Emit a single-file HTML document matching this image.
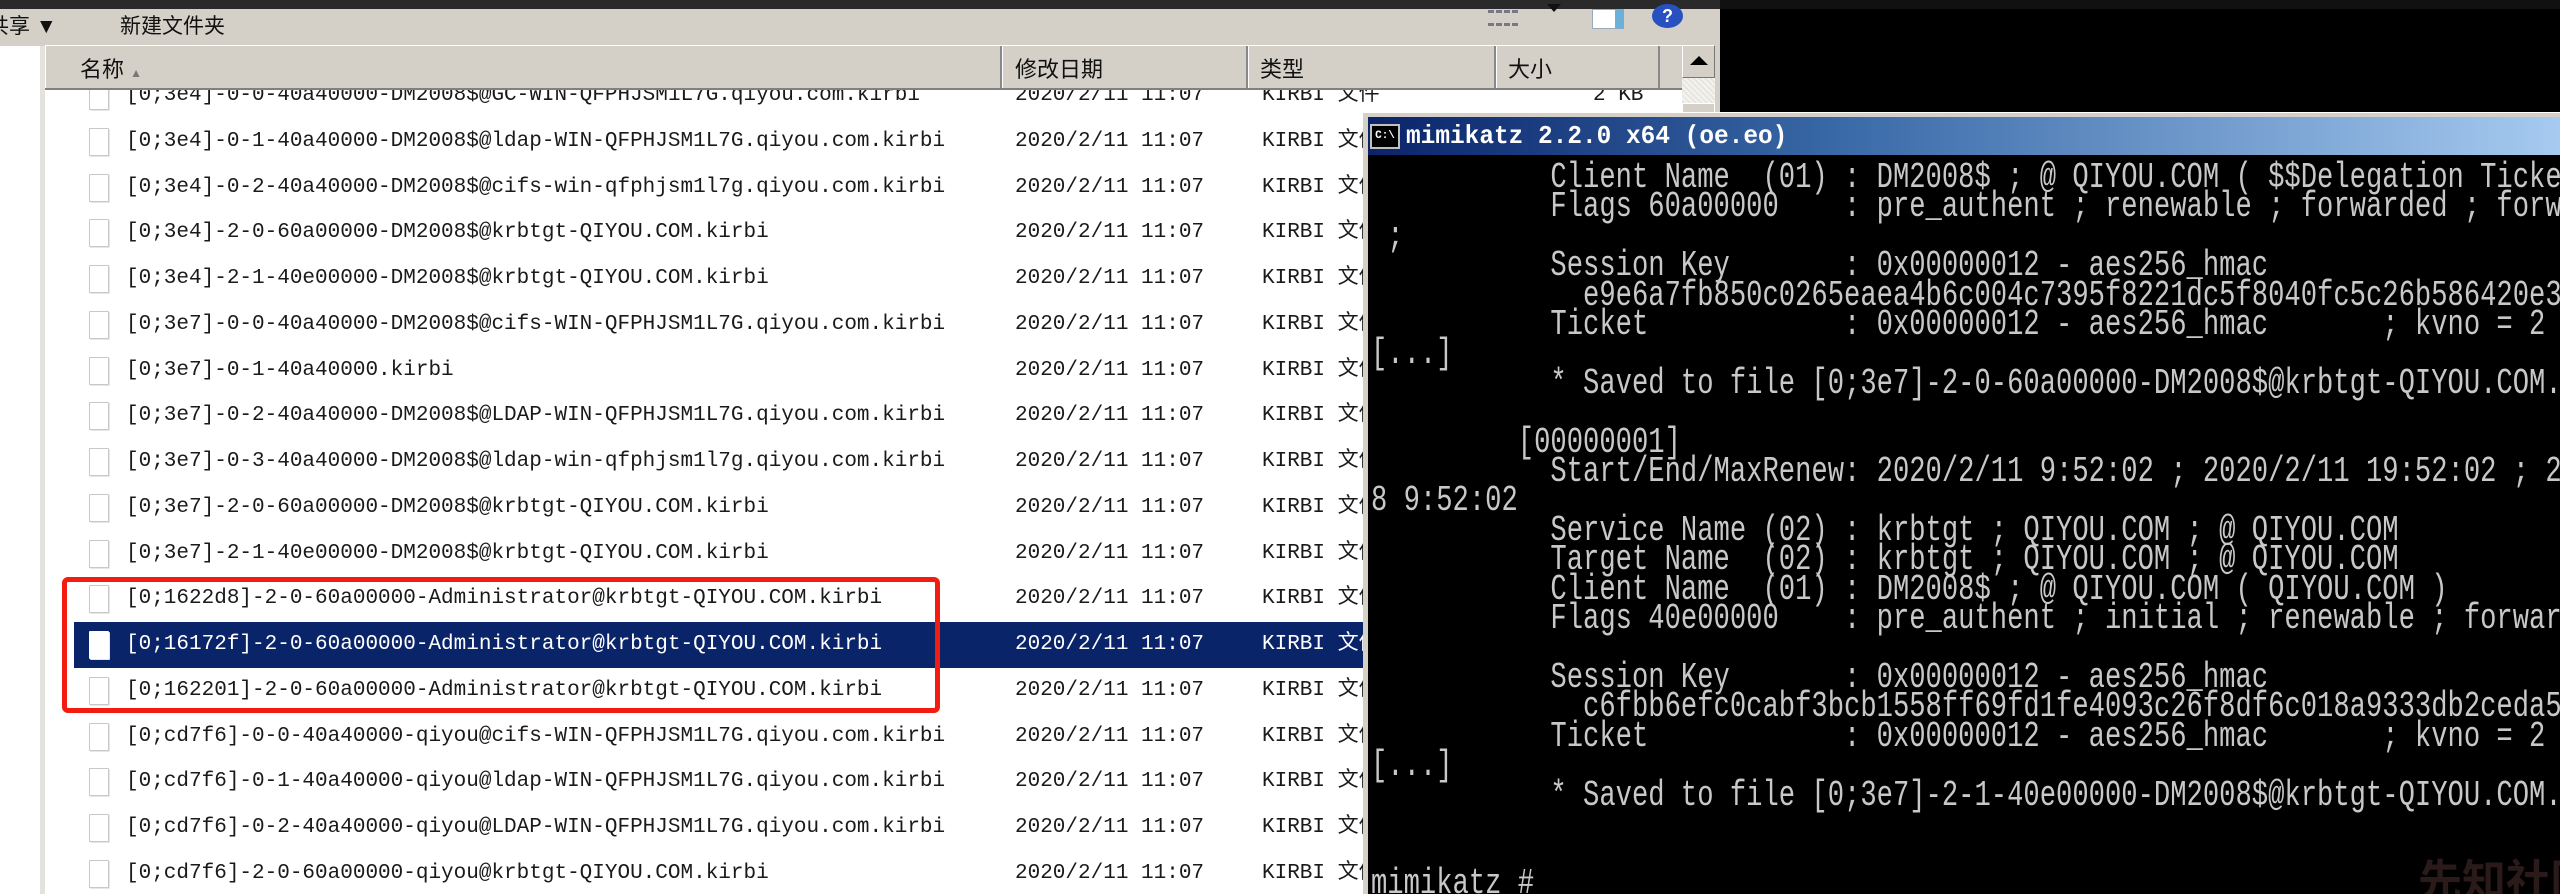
<!DOCTYPE html>
<html><head><meta charset="utf-8"><style>
*{margin:0;padding:0;box-sizing:border-box}
body{width:2560px;height:894px;overflow:hidden;background:#000;position:relative;font-family:"Liberation Sans","Noto Sans CJK SC",sans-serif}
.abs{position:absolute}
.row{position:absolute;left:45px;width:1637px;height:46px;font-family:"Liberation Mono","Noto Sans CJK SC",monospace;font-size:21px;color:#1a1a1a;line-height:46px;white-space:nowrap}
.row .n{position:absolute;left:81px}
.row .d{position:absolute;left:970px}
.row .t{position:absolute;left:1217px}
.row .s{position:absolute;left:1548px}
.ic{position:absolute;left:44px;top:9px;width:20px;height:28px;background:#fff;border:1px solid #c8c8c8;border-radius:1px;box-shadow:1px 1px 0 #e6e6e6}
.sel{background:#0a246a;color:#fff}
.sel .ic{background:#fff;border-color:#fff}
.term{font-family:"Liberation Mono",monospace;font-size:36px;color:#c8c8c8;line-height:29.4px;white-space:pre;transform:scaleX(.755);transform-origin:0 0}
</style></head><body>
<div class="abs" style="left:0;top:0;width:1720px;height:9px;background:#2a2a2a"></div>
<div class="abs" style="left:1720px;top:0;width:840px;height:9px;background:#111"></div>
<div class="abs" style="left:0;top:9px;width:1720px;height:37px;background:#d4d0c8"></div>
<div class="abs" style="left:-12px;top:10px;font-size:21px;color:#111;white-space:nowrap">共享 ▼</div>
<div class="abs" style="left:120px;top:10px;font-size:21px;color:#111">新建文件夹</div>
<div class="abs" style="left:1488px;top:10px;width:30px;height:16px;border-top:3px dashed #778;border-bottom:3px dashed #778"></div>
<div class="abs" style="left:1547px;top:4px;width:0;height:0;border-left:7px solid transparent;border-right:7px solid transparent;border-top:8px solid #111"></div>
<div class="abs" style="left:1592px;top:9px;width:32px;height:20px;background:#fff;border:1px solid #9ab;border-right:9px solid #6ab0d8"></div>
<div class="abs" style="left:1652px;top:4px;width:31px;height:24px;border-radius:50%;background:#2850c0;color:#fff;font-weight:bold;font-size:18px;text-align:center;line-height:24px">?</div>
<div class="abs" style="left:0;top:46px;width:40px;height:848px;background:#fff"></div>
<div class="abs" style="left:40px;top:46px;width:5px;height:848px;background:#e4e2dc"></div>
<div class="abs" style="left:45px;top:46px;width:1637px;height:848px;background:#fff"></div>
<div class="abs" style="left:1682px;top:46px;width:38px;height:848px;background:#d4d0c8"></div>
<div class="abs" style="left:1682px;top:78px;width:33px;height:816px;background:repeating-linear-gradient(45deg,#e8e6e0 0 2px,#f4f3f0 2px 4px)"></div>
<div class="abs" style="left:1682px;top:45px;width:33px;height:33px;background:#d4d0c8;border:1px solid #fff;border-right-color:#777;border-bottom-color:#777"></div>
<div class="abs" style="left:1690px;top:56px;width:0;height:0;border-left:9px solid transparent;border-right:9px solid transparent;border-bottom:9px solid #000"></div>
<div class="abs" style="left:1682px;top:103px;width:33px;height:20px;background:#d4d0c8;border:1px solid #fff"></div>

<div class="abs" style="left:0;top:90px;width:1682px;height:804px;overflow:hidden">
<div style="position:absolute;left:0;top:-17px;width:1682px">
<div class="row" style="top:0px"><div class="ic"></div><span class="n">[0;3e4]-0-0-40a40000-DM2008$@GC-WIN-QFPHJSM1L7G.qiyou.com.kirbi</span><span class="d">2020/2/11 11:07</span><span class="t">KIRBI 文件</span><span class="s">2 KB</span></div>
<div class="row" style="top:45.75px"><div class="ic"></div><span class="n">[0;3e4]-0-1-40a40000-DM2008$@ldap-WIN-QFPHJSM1L7G.qiyou.com.kirbi</span><span class="d">2020/2/11 11:07</span><span class="t">KIRBI 文件</span></div>
<div class="row" style="top:91.5px"><div class="ic"></div><span class="n">[0;3e4]-0-2-40a40000-DM2008$@cifs-win-qfphjsm1l7g.qiyou.com.kirbi</span><span class="d">2020/2/11 11:07</span><span class="t">KIRBI 文件</span></div>
<div class="row" style="top:137.25px"><div class="ic"></div><span class="n">[0;3e4]-2-0-60a00000-DM2008$@krbtgt-QIYOU.COM.kirbi</span><span class="d">2020/2/11 11:07</span><span class="t">KIRBI 文件</span></div>
<div class="row" style="top:183px"><div class="ic"></div><span class="n">[0;3e4]-2-1-40e00000-DM2008$@krbtgt-QIYOU.COM.kirbi</span><span class="d">2020/2/11 11:07</span><span class="t">KIRBI 文件</span></div>
<div class="row" style="top:228.75px"><div class="ic"></div><span class="n">[0;3e7]-0-0-40a40000-DM2008$@cifs-WIN-QFPHJSM1L7G.qiyou.com.kirbi</span><span class="d">2020/2/11 11:07</span><span class="t">KIRBI 文件</span></div>
<div class="row" style="top:274.5px"><div class="ic"></div><span class="n">[0;3e7]-0-1-40a40000.kirbi</span><span class="d">2020/2/11 11:07</span><span class="t">KIRBI 文件</span></div>
<div class="row" style="top:320.25px"><div class="ic"></div><span class="n">[0;3e7]-0-2-40a40000-DM2008$@LDAP-WIN-QFPHJSM1L7G.qiyou.com.kirbi</span><span class="d">2020/2/11 11:07</span><span class="t">KIRBI 文件</span></div>
<div class="row" style="top:366px"><div class="ic"></div><span class="n">[0;3e7]-0-3-40a40000-DM2008$@ldap-win-qfphjsm1l7g.qiyou.com.kirbi</span><span class="d">2020/2/11 11:07</span><span class="t">KIRBI 文件</span></div>
<div class="row" style="top:411.75px"><div class="ic"></div><span class="n">[0;3e7]-2-0-60a00000-DM2008$@krbtgt-QIYOU.COM.kirbi</span><span class="d">2020/2/11 11:07</span><span class="t">KIRBI 文件</span></div>
<div class="row" style="top:457.5px"><div class="ic"></div><span class="n">[0;3e7]-2-1-40e00000-DM2008$@krbtgt-QIYOU.COM.kirbi</span><span class="d">2020/2/11 11:07</span><span class="t">KIRBI 文件</span></div>
<div class="row" style="top:503.25px"><div class="ic"></div><span class="n">[0;1622d8]-2-0-60a00000-Administrator@krbtgt-QIYOU.COM.kirbi</span><span class="d">2020/2/11 11:07</span><span class="t">KIRBI 文件</span></div>
<div class="row sel" style="top:549px;left:74px;width:1608px"><div class="ic" style="left:15px"></div><span class="n" style="left:52px">[0;16172f]-2-0-60a00000-Administrator@krbtgt-QIYOU.COM.kirbi</span><span class="d" style="left:941px">2020/2/11 11:07</span><span class="t" style="left:1188px">KIRBI 文件</span></div>
<div class="row" style="top:594.75px"><div class="ic"></div><span class="n">[0;162201]-2-0-60a00000-Administrator@krbtgt-QIYOU.COM.kirbi</span><span class="d">2020/2/11 11:07</span><span class="t">KIRBI 文件</span></div>
<div class="row" style="top:640.5px"><div class="ic"></div><span class="n">[0;cd7f6]-0-0-40a40000-qiyou@cifs-WIN-QFPHJSM1L7G.qiyou.com.kirbi</span><span class="d">2020/2/11 11:07</span><span class="t">KIRBI 文件</span></div>
<div class="row" style="top:686.25px"><div class="ic"></div><span class="n">[0;cd7f6]-0-1-40a40000-qiyou@ldap-WIN-QFPHJSM1L7G.qiyou.com.kirbi</span><span class="d">2020/2/11 11:07</span><span class="t">KIRBI 文件</span></div>
<div class="row" style="top:732px"><div class="ic"></div><span class="n">[0;cd7f6]-0-2-40a40000-qiyou@LDAP-WIN-QFPHJSM1L7G.qiyou.com.kirbi</span><span class="d">2020/2/11 11:07</span><span class="t">KIRBI 文件</span></div>
<div class="row" style="top:777.75px"><div class="ic"></div><span class="n">[0;cd7f6]-2-0-60a00000-qiyou@krbtgt-QIYOU.COM.kirbi</span><span class="d">2020/2/11 11:07</span><span class="t">KIRBI 文件</span></div>
</div></div>

<div class="abs" style="left:45px;top:45px;width:1637px;height:45px;background:#d4d0c8;border-top:1px solid #fff;border-bottom:2px solid #808080"></div>
<div class="abs" style="left:45px;top:46px;width:957px;height:42px;border-right:2px solid #888;border-left:1px solid #fff"></div>
<div class="abs" style="left:1002px;top:46px;width:246px;height:42px;border-right:2px solid #888;border-left:1px solid #fff"></div>
<div class="abs" style="left:1248px;top:46px;width:248px;height:42px;border-right:2px solid #888;border-left:1px solid #fff"></div>
<div class="abs" style="left:1496px;top:46px;width:164px;height:42px;border-right:2px solid #888;border-left:1px solid #fff"></div>
<div class="abs" style="left:80px;top:52px;font-size:22px;color:#111">名称 <span style="font-size:12px;color:#777">▲</span></div>
<div class="abs" style="left:1015px;top:52px;font-size:22px;color:#111">修改日期</div>
<div class="abs" style="left:1260px;top:52px;font-size:22px;color:#111">类型</div>
<div class="abs" style="left:1508px;top:52px;font-size:22px;color:#111">大小</div>

<div class="abs" style="left:62px;top:577px;width:878px;height:136px;border:5px solid #f21d10;border-radius:6px"></div>

<div class="abs" style="left:1363px;top:112px;width:1197px;height:782px;background:#d4d0c8;border-top:1px solid #fff"></div>
<div class="abs" style="left:1368px;top:117px;width:1192px;height:38px;background:linear-gradient(90deg,#0a246a,#3a6aa8 40%,#a6caf0)"></div>
<div class="abs" style="left:1370px;top:124px;width:30px;height:25px;background:#000;border:2px solid #c0c0c0;color:#fff;font:bold 11px 'Liberation Mono',monospace;line-height:20px;text-align:center">C:\</div>
<div class="abs" style="left:1406px;top:118px;font:bold 26px 'Liberation Mono',monospace;color:#fff;line-height:36px;white-space:pre;transform:scaleX(.94);transform-origin:0 0">mimikatz 2.2.0 x64 (oe.eo)</div>
<div class="abs" style="left:1368px;top:155px;width:1192px;height:739px;background:#000;overflow:hidden">
<div class="term" style="position:absolute;left:3px;top:8px">           Client Name  (01) : DM2008$ ; @ QIYOU.COM ( $$Delegation Ticket )
           Flags 60a00000    : pre_authent ; renewable ; forwarded ; forwardable
 ;
           Session Key       : 0x00000012 - aes256_hmac
             e9e6a7fb850c0265eaea4b6c004c7395f8221dc5f8040fc5c26b586420e3
           Ticket            : 0x00000012 - aes256_hmac       ; kvno = 2
[...]
           * Saved to file [0;3e7]-2-0-60a00000-DM2008$@krbtgt-QIYOU.COM.kirbi

         [00000001]
           Start/End/MaxRenew: 2020/2/11 9:52:02 ; 2020/2/11 19:52:02 ; 2020/2/1
8 9:52:02
           Service Name (02) : krbtgt ; QIYOU.COM ; @ QIYOU.COM
           Target Name  (02) : krbtgt ; QIYOU.COM ; @ QIYOU.COM
           Client Name  (01) : DM2008$ ; @ QIYOU.COM ( QIYOU.COM )
           Flags 40e00000    : pre_authent ; initial ; renewable ; forwardable

           Session Key       : 0x00000012 - aes256_hmac
             c6fbb6efc0cabf3bcb1558ff69fd1fe4093c26f8df6c018a9333db2ceda5
           Ticket            : 0x00000012 - aes256_hmac       ; kvno = 2
[...]
           * Saved to file [0;3e7]-2-1-40e00000-DM2008$@krbtgt-QIYOU.COM.kirbi


mimikatz #</div>
<div class="abs" style="left:1050px;top:690px;font-size:44px;color:#2a1a1a;font-weight:bold;white-space:nowrap">先知社区</div>
</div>
</body></html>
